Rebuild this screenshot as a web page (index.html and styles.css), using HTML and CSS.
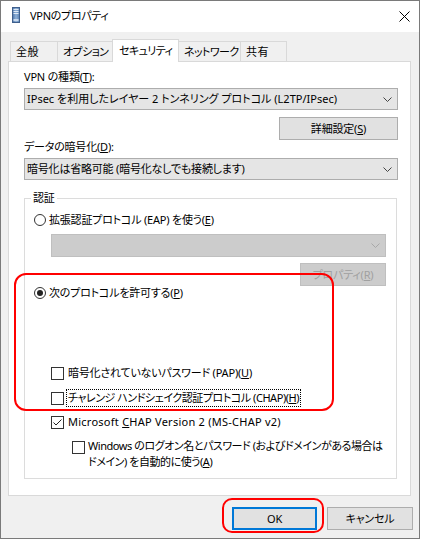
FILE: index.html
```html
<!DOCTYPE html>
<html lang="ja">
<head>
<meta charset="utf-8">
<title>VPNのプロパティ</title>
<link rel="stylesheet" href="styles.css">
</head>
<body>
<div class="window">
  <div class="titlebar">
    <svg class="app-icon" width="8" height="16" viewBox="0 0 8 16">
      <defs>
        <linearGradient id="ig" x1="0" y1="0" x2="1" y2="0">
          <stop offset="0" stop-color="#4d74a8"/>
          <stop offset="0.5" stop-color="#8fb1d8"/>
          <stop offset="1" stop-color="#5c82b3"/>
        </linearGradient>
      </defs>
      <rect x="0.5" y="0.5" width="7" height="15" fill="url(#ig)" stroke="#3f5f8c"/>
      <rect x="1.5" y="2" width="5" height="1" fill="#dfe9f5"/>
      <rect x="1.5" y="4" width="5" height="1" fill="#dfe9f5"/>
      <rect x="1.5" y="6" width="5" height="1" fill="#dfe9f5"/>
      <rect x="1.5" y="12" width="5" height="2" fill="#c9d9ec"/>
    </svg>
    <span class="title">VPNのプロパティ</span>
    <svg class="close" width="11" height="11" viewBox="0 0 11 11">
      <path d="M0.5 0.5 L10.5 10.5 M10.5 0.5 L0.5 10.5" stroke="#000" stroke-width="1" fill="none"/>
    </svg>
  </div>
  <div class="client">
    <div class="tabs">
      <div class="tab tab-general">全般</div>
      <div class="tab tab-options">オプション</div>
      <div class="tab tab-security selected">セキュリティ</div>
      <div class="tab tab-network">ネットワーク</div>
      <div class="tab tab-share">共有</div>
    </div>
    <div class="panel">
      <div class="label label-type">VPN の種類(<u>T</u>):</div>
      <div class="combo combo-type">
        <span class="combo-text">IPsec を利用したレイヤー 2 トンネリング プロトコル (L2TP/IPsec)</span>
        <svg class="chevron" width="9" height="5" viewBox="0 0 9 5"><path d="M0.5 0.5 L4.5 4.5 L8.5 0.5" stroke="#444" fill="none"/></svg>
      </div>
      <div class="btn btn-detail">詳細設定(<u>S</u>)</div>
      <div class="label label-enc">データの暗号化(<u>D</u>):</div>
      <div class="combo combo-enc">
        <span class="combo-text">暗号化は省略可能 (暗号化なしでも接続します)</span>
        <svg class="chevron" width="9" height="5" viewBox="0 0 9 5"><path d="M0.5 0.5 L4.5 4.5 L8.5 0.5" stroke="#444" fill="none"/></svg>
      </div>
      <fieldset class="group">
        <legend>認証</legend>
        <div class="row row-eap"><span class="radio"></span><span class="text">拡張認証プロトコル (EAP) を使う(<u>E</u>)</span></div>
        <div class="combo combo-disabled">
          <span class="combo-text"></span>
          <svg class="chevron" width="9" height="5" viewBox="0 0 9 5"><path d="M0.5 0.5 L4.5 4.5 L8.5 0.5" stroke="#a8a8a8" fill="none"/></svg>
        </div>
        <div class="btn btn-disabled btn-prop">プロパティ(<u>R</u>)</div>
        <div class="row row-allow"><span class="radio checked"></span><span class="text">次のプロトコルを許可する(<u>P</u>)</span></div>
        <div class="row row-check row-pap"><span class="check"></span><span class="text">暗号化されていないパスワード (PAP)(<u>U</u>)</span></div>
        <div class="row row-check row-chap"><span class="check"></span><span class="text focus">チャレンジ ハンドシェイク認証プロトコル (CHAP)(<u>H</u>)</span></div>
        <div class="row row-check row-ms"><span class="check"><svg width="11" height="11" viewBox="0 0 11 11"><path d="M1.5 5.5 L4 8 L9.5 2.5" stroke="#222" stroke-width="1" fill="none"/></svg></span><span class="text">Microsoft <u>C</u>HAP Version 2 (MS-CHAP v2)</span></div>
        <div class="row row-check row-win"><span class="check"></span><span class="text">Windows のログオン名とパスワード (およびドメインがある場合は<br>ドメイン) を自動的に使う(<u>A</u>)</span></div>
      </fieldset>
    </div>
    <div class="buttons">
      <div class="btn btn-ok">OK</div>
      <div class="btn btn-cancel">キャンセル</div>
    </div>
  </div>
  <div class="mark mark-protocols"></div>
  <div class="mark mark-ok"></div>
</div>
</body>
</html>
```

FILE: styles.css
```css
html, body {
  margin: 0;
  padding: 0;
  background: #ffffff;
}
body {
  font-family: "Noto Sans", "Noto Sans CJK JP", sans-serif;
  font-size: 11px;
  letter-spacing: -0.2px;
  color: #000;
  font-feature-settings: "palt";
}
u {
  text-decoration: underline;
  text-underline-offset: 1px;
}
.window {
  position: relative;
  width: 420px;
  height: 539px;
  box-sizing: border-box;
  border: 1px solid #7a7a7a;
  background: #f0f0f0;
  display: flex;
  flex-direction: column;
}
.titlebar {
  height: 31px;
  background: #ffffff;
  display: flex;
  align-items: center;
  padding-left: 11px;
  padding-right: 8px;
}
.app-icon {
  margin-top: -3px;
  flex-shrink: 0;
}
.title {
  margin-left: 10px;
  line-height: 16px;
  margin-top: -2px;
  letter-spacing: -0.3px;
}
.close {
  margin-left: auto;
  margin-right: 1px;
  margin-top: -1px;
}
.client {
  flex: 1;
  padding: 7px 8px 0 7px;
  display: flex;
  flex-direction: column;
}
.tabs {
  display: flex;
  align-items: flex-end;
  height: 22px;
  padding-left: 2px;
  position: relative;
  z-index: 1;
}
.tab {
  box-sizing: border-box;
  height: 20px;
  border: 1px solid #d9d9d9;
  border-bottom: none;
  background: #f0f0f0;
  padding-left: 5px;
  line-height: 20px;
  white-space: nowrap;
  overflow: hidden;
  margin-left: -1px;
  letter-spacing: -0.6px;
}
.tab-general { width: 48px; margin-left: 0; letter-spacing: 0.5px; }
.tab-options { width: 56px; }
.tab-security { width: 67px; }
.tab-network { width: 63px; }
.tab-share { width: 47px; letter-spacing: 0.5px; }
.tab.selected {
  height: 23px;
  background: #ffffff;
  margin-bottom: -1px;
  padding-left: 6px;
  line-height: 21px;
}
.panel {
  box-sizing: border-box;
  height: 435px;
  border: 1px solid #d9d9d9;
  background: #ffffff;
  padding: 7px 12px 0 15px;
  display: flex;
  flex-direction: column;
}
.label {
  line-height: 16px;
  height: 16px;
}
.label-enc {
  margin-top: -1px;
}
.combo {
  box-sizing: border-box;
  height: 22px;
  margin-top: 3px;
  border: 1px solid #adadad;
  background: #e5e5e5;
  display: flex;
  align-items: center;
  padding: 0 5px 0 2px;
}
.combo-text {
  flex: 1;
  line-height: 16px;
  white-space: nowrap;
}
.combo-type .combo-text {
  letter-spacing: 0;
}
.chevron {
  display: block;
  flex-shrink: 0;
}
.btn {
  box-sizing: border-box;
  height: 23px;
  border: 1px solid #adadad;
  background: #e1e1e1;
  display: flex;
  align-items: center;
  justify-content: center;
  line-height: 16px;
}
.btn-detail {
  align-self: flex-end;
  width: 119px;
  margin-top: 7px;
}
.group {
  margin: 10px 1px 0 0;
  padding: 0 10px 8px 9px;
  border: 1px solid #dcdcdc;
  min-inline-size: 0;
  display: flex;
  flex-direction: column;
}
.group legend {
  padding: 0 2px;
  margin-left: -3px;
  line-height: 16px;
}
.row {
  display: flex;
  align-items: center;
  height: 16px;
  line-height: 16px;
  white-space: nowrap;
}
.row-eap { margin-top: 6px; }
.row-allow { margin-top: -1px; }
.radio {
  box-sizing: border-box;
  flex-shrink: 0;
  width: 12px;
  height: 12px;
  border: 1px solid #333;
  border-radius: 50%;
  background: #fff;
  margin-right: 3px;
  display: flex;
  align-items: center;
  justify-content: center;
}
.radio.checked::after {
  content: "";
  width: 6px;
  height: 6px;
  border-radius: 50%;
  background: #222;
}
.combo-disabled {
  height: 23px;
  margin-top: 6px;
  margin-left: 17px;
  background: #cccccc;
  border-color: #bfbfbf;
}
.btn-disabled {
  background: #cccccc;
  border-color: #bfbfbf;
  color: #a0a0a0;
}
.btn-prop {
  align-self: flex-end;
  width: 86px;
  margin-top: 6px;
}
.check {
  box-sizing: border-box;
  flex-shrink: 0;
  width: 13px;
  height: 13px;
  border: 1px solid #333;
  background: #fff;
  margin-left: 17px;
  margin-right: 4px;
  display: flex;
  align-items: center;
  justify-content: center;
}
.check svg {
  display: block;
}
.row-pap { margin-top: 64px; }
.row-chap { margin-top: 9px; letter-spacing: -0.45px; }
.row-chap .check { margin-right: 3px; }
.focus {
  padding: 0 1px;
  outline: 1px dotted #000;
}
.row-ms { margin-top: 8px; letter-spacing: 0.25px; }
.row-win {
  margin-top: 8px;
  height: 32px;
  align-items: flex-start;
  letter-spacing: -0.45px;
}
.row-win .check {
  margin-left: 38px;
  margin-top: 3px;
  margin-right: 3px;
}
.buttons {
  display: flex;
  justify-content: flex-end;
  gap: 10px;
  margin-top: 11px;
  margin-right: -2px;
}
.btn-ok {
  width: 85px;
  border: 2px solid #0078d7;
}
.btn-cancel {
  width: 86px;
}
.mark {
  position: absolute;
  box-sizing: border-box;
  border: 2.5px solid #ff0000;
}
.mark-protocols {
  left: 13px;
  top: 272px;
  width: 320px;
  height: 138px;
  border-radius: 12px;
}
.mark-ok {
  left: 221px;
  top: 497px;
  width: 102px;
  height: 35px;
  border-radius: 10px;
}
```
